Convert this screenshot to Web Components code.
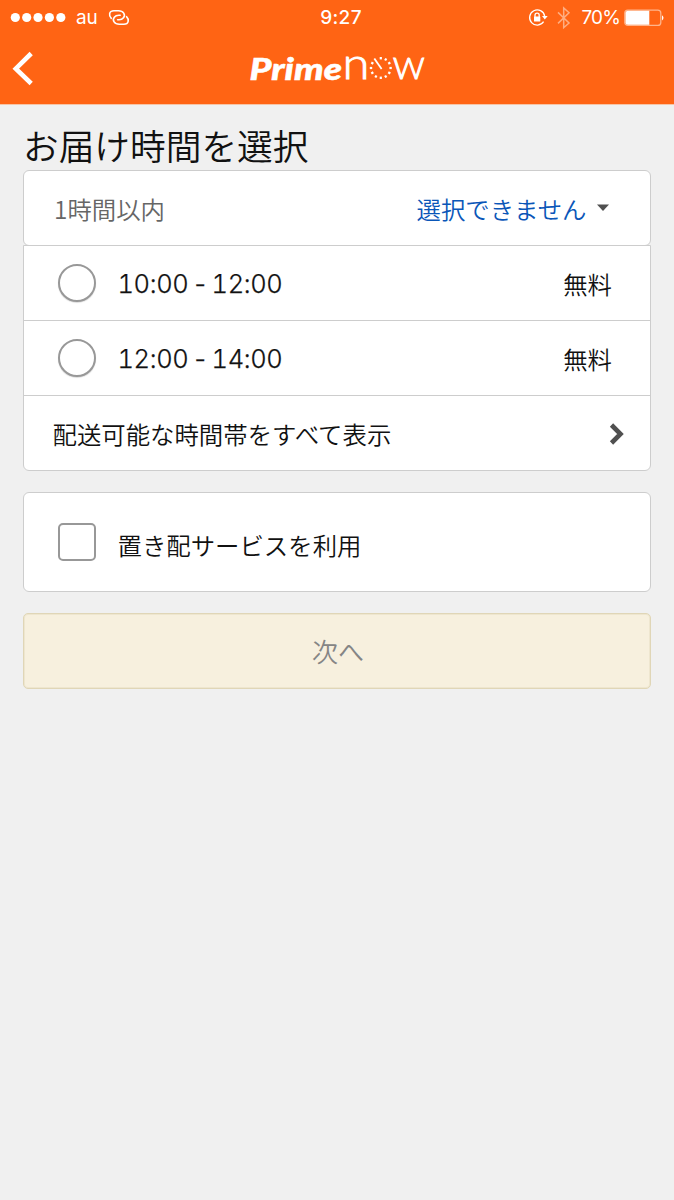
<!DOCTYPE html>
<html lang="ja">
<head>
<meta charset="utf-8">
<title>Prime Now</title>
<style>
html,body{margin:0;height:100%}
body{background:#f0f0f0;color:#111;font-family:"Noto Sans CJK JP DemiLight","Noto Sans CJK JP",sans-serif;font-weight:350}
</style>
</head>
<body>
<now-app></now-app>
<script>
const define = (name, html) => customElements.define(name, class extends HTMLElement {
  constructor() {
    super();
    const t = document.createElement('template');
    t.innerHTML = html;
    this.attachShadow({mode: 'open'}).append(t.content.cloneNode(true));
  }
});

define('status-bar', `
<style>
:host{display:grid;grid-template-columns:1fr auto 1fr;align-items:center;height:34px;color:#fff;font:400 19px/34px Inter,sans-serif}
.l,.r{display:flex;align-items:center}
.l{padding-left:10px}
.r{justify-content:flex-end;padding-right:9px}
.time{font-weight:500;font-size:19px;letter-spacing:.35px;padding:1px 0 0 8px}
.au{margin-left:10px;letter-spacing:-.2px;padding-top:1px}
svg{display:block;flex:none}
.link{margin-left:10px}
.bt{margin:0 10px 0 9px}
.pct{letter-spacing:-.85px;padding-top:1px}
.bat{margin-left:4px}
</style>
<div class="l">
<svg width="56" height="34" fill="#fff"><circle cx="5.3" cy="16.5" r="4.6"/><circle cx="16.7" cy="16.5" r="4.6"/><circle cx="28" cy="16.5" r="4.6"/><circle cx="39.4" cy="16.5" r="4.6"/><circle cx="50.8" cy="16.5" r="4.6"/></svg>
<span class="au">au</span>
<svg class="link" width="22" height="34" viewBox="0 0 22 34" fill="none" stroke="#fff" stroke-width="1.600" stroke-linecap="round"><path d="M3.300 17.300C.7 14.800 .6 9.700 6 9.700H10.500C15.500 9.700 17.800 13.800 15.500 16.800C14.200 18.500 12.600 18.800 11 18.800H9.600"/><path d="M18.500 15.700C21.100 18.200 21.200 23.300 15.800 23.300H11.300C6.300 23.300 4 19.200 6.300 16.200C7.600 14.500 9.200 14.200 10.800 14.200H12.200"/></svg>
</div>
<div class="time">9:27</div>
<div class="r">
<svg width="20" height="34" viewBox="0 0 20 34" fill="none" stroke="#fff" stroke-width="1.300"><path d="M15.600 20.700A7.600 7.600 0 1 1 16.700 15"/><path d="M14 15H19.700L16.800 18.500Z" fill="#fff" stroke="none"/><path d="M7 16V14.200a2.100 2.100 0 0 1 4.200 0V16"/><rect x="6" y="15.500" width="6.300" height="5" rx=".6" fill="#fff" stroke="none"/></svg>
<svg class="bt" width="14" height="34" viewBox="0 0 14 34" fill="none" stroke="#ffad80" stroke-width="1.500"><path d="M1 11.400L12 22L6.700 26.700V6.900L12 11.700L1 22.400"/></svg>
<span class="pct">70%</span>
<svg class="bat" width="41" height="34" viewBox="0 0 41 34"><rect x=".8" y="9.200" width="36" height="15.200" rx="3" fill="none" stroke="#ffb48b" stroke-width="1.300"/><path d="M4 9.800H25.300V23.800H4Q1.500 23.800 1.500 21.300V12.300Q1.500 9.800 4 9.800Z" fill="#fff"/><path d="M38 14.200Q41 16.800 38 19.400Z" fill="#fff"/></svg>
</div>`);

define('nav-bar', `
<style>
:host{display:grid;grid-template-columns:1fr 176px 1fr;height:70px}
svg{display:block}
</style>
<svg width="60" height="70" viewBox="0 34 60 70" fill="none" stroke="#fff" stroke-width="4.600"><path d="M31.200 53.500L15.800 68.700L31.200 83.500"/></svg>
<svg width="176" height="70" viewBox="249 34 176 70" fill="#fff">
<text x="249.500" y="79.500" font-family="Lato" font-weight="900" font-style="italic" font-size="31" stroke="#fff" stroke-width=".5" textLength="92.500" lengthAdjust="spacingAndGlyphs">Prime</text>
<text x="342.500" y="79" font-family="Lato" font-weight="300" font-size="44" stroke="#fff" stroke-width=".9" textLength="27" lengthAdjust="spacingAndGlyphs">n</text>
<g id="dial" stroke="#fff" stroke-width="2.200"></g>
<path d="M374.300 58.400L381.600 69" stroke="#fff" stroke-width="1.800"/>
<text x="393" y="79" font-family="Lato" font-weight="300" font-size="30" stroke="#fff" stroke-width="1.100" textLength="31.500" lengthAdjust="spacingAndGlyphs">W</text>
</svg>
<span></span>`);

define('app-header', `
<style>:host{display:block;background:#ff6414;border-bottom:1px solid #f7c4a6;box-sizing:border-box;height:105px}</style>
<status-bar></status-bar><nav-bar></nav-bar>`);

define('card-box', `
<style>:host{display:block;box-sizing:border-box;background:#fff;border:1px solid #cdcdcd;border-radius:6px}</style><slot></slot>`);

define('list-row', `
<style>
:host{display:flex;align-items:center;box-sizing:border-box;font-size:24.400px;line-height:36px}
.main{flex:1;display:flex;align-items:center}
</style><div class="main"><slot></slot></div><slot name="end"></slot>`);

define('check-mark', `
<style>
:host{display:block;box-sizing:border-box;width:38px;height:38px;margin:0 21.500px 0 34px;border:2px solid #989898;border-radius:5px;background:#fff;flex:none}
:host([round]){border-radius:50%;box-shadow:0 1px 1px #ddd}
</style>`);

define('time-slot', `
<style>
:host{display:block}
.t{font:300 25.500px/36px Inter,sans-serif;font-feature-settings:"tnum";-webkit-text-stroke:.25px #111;letter-spacing:-.4px;word-spacing:-2.900px;padding-top:2px}
.p{margin-right:38px;padding-top:1px}
list-row{height:100%}
</style>
<list-row><check-mark round></check-mark><span class="t"><slot></slot></span><span class="p" slot="end">無料</span></list-row>`);

define('primary-button', `
<style>
:host{display:block}
button{all:unset;box-sizing:border-box;display:block;width:100%;height:76px;text-align:center;background:#f7f0de;border:1px solid #e0d6b7;box-shadow:inset 0 0 0 1px #eee6cf;border-radius:5px;color:#858585;font-size:26px;line-height:74px;padding-left:2px}
</style><button disabled><slot></slot></button>`);

define('now-app', `
<style>
:host{display:block;min-height:1200px;background:#f0f0f0}
main{padding:17px 23px 0}
h1{margin:0 0 2px;font-size:35.700px;line-height:46px;height:46px;font-weight:inherit}
.first{height:76px}
.first list-row{height:75px;padding:1px 39.500px 0 30px;color:#666}
.sel{color:#0a56b8;display:flex;align-items:center;gap:9px}
.rest{height:226px;margin-top:-1px;border-radius:0 0 6px 6px}
.rest>*{height:75px;box-sizing:border-box}
time-slot{border-bottom:1px solid #cdcdcd}
.all{padding:0 25px 0 28.500px}
.place{height:100px;margin:21px 0}
.place list-row{height:98px}
.place span{padding-top:6px}
svg{display:block}
</style>
<app-header></app-header>
<main>
<h1>お届け時間を選択</h1>
<card-box class="first"><list-row><span>1時間以内</span><span class="sel" slot="end">選択できません<svg width="15" height="12" viewBox="0 0 15 12"><path d="M1 1.500H13L7 8Z" fill="#505050"/></svg></span></list-row></card-box>
<card-box class="rest">
<time-slot>10:00 - 12:00</time-slot>
<time-slot>12:00 - 14:00</time-slot>
<list-row class="all">配送可能な時間帯をすべて表示<svg slot="end" width="16" height="22" viewBox="0 0 16 22" fill="none" stroke="#505050" stroke-width="4.600"><path d="M2.500 2L11.500 11L2.500 20"/></svg></list-row>
</card-box>
<card-box class="place"><list-row><check-mark></check-mark><span>置き配サービスを利用</span></list-row></card-box>
<primary-button>次へ</primary-button>
</main>`);

const dial = document.querySelector('now-app').shadowRoot.querySelector('app-header').shadowRoot.querySelector('nav-bar').shadowRoot.getElementById('dial');
for (let i = 0; i < 12; i++) {
  if (i === 11) continue;
  const l = document.createElementNS('http://www.w3.org/2000/svg', 'line');
  l.setAttribute('x1', 380.8); l.setAttribute('x2', 380.8);
  l.setAttribute('y1', 57); l.setAttribute('y2', 59.400);
  l.setAttribute('transform', `rotate(${i * 30} 380.8 68)`);
  dial.append(l);
}
</script>
</body>
</html>
